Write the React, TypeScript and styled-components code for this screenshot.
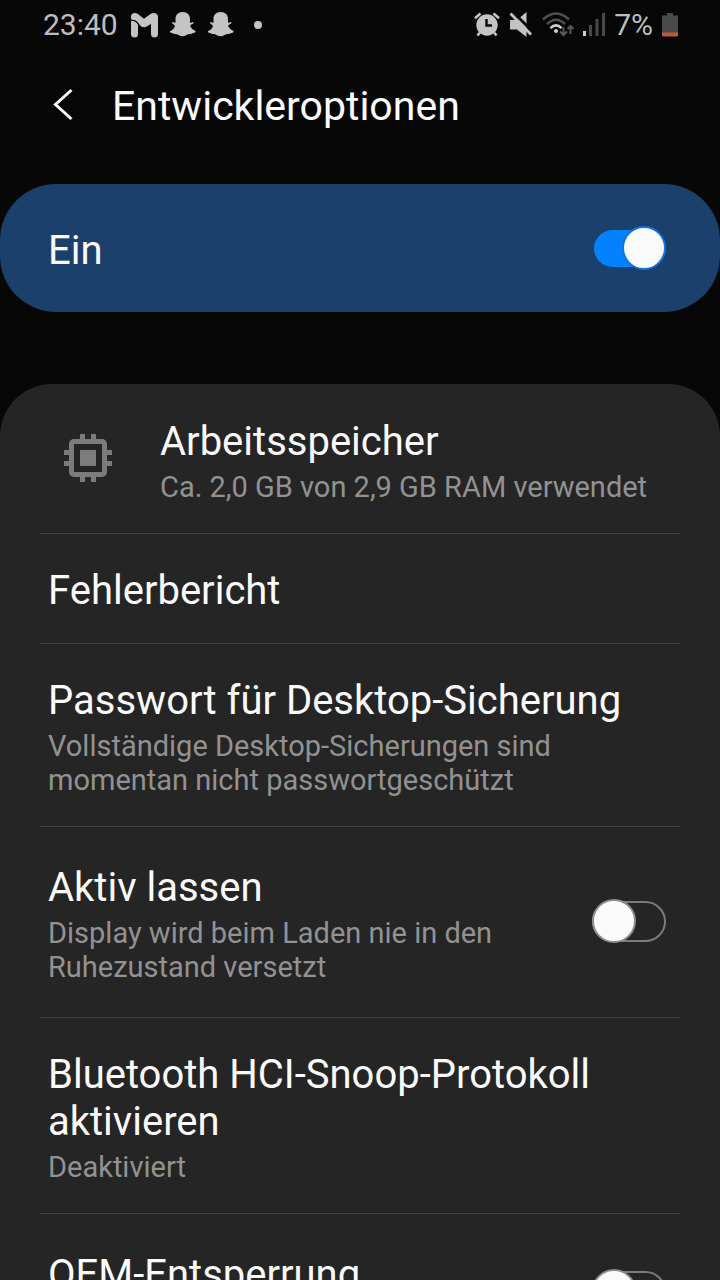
import React from "react";
import styled, { createGlobalStyle, css } from "styled-components";

const GlobalStyle = createGlobalStyle`
  *, *::before { box-sizing: border-box; }
  html, body { margin: 0; background: #070707; }
  body { font-family: Roboto, "Noto Sans", sans-serif; color: #fafafa; }
`;

const Screen = styled.div`
  height: 100vh;
  overflow: hidden;
  display: flex;
  flex-direction: column;
  background: #070707;
`;

const StatusBar = styled.div`
  flex: none;
  display: flex;
  align-items: center;
  justify-content: space-between;
  height: 48px;
  padding: 1px 42px 0 43px;
  font-size: 30px;
  line-height: 48px;
  color: #bebebe;
`;

const StatusGroup = styled.div<{ $gap: number }>`
  display: flex;
  align-items: center;
  gap: ${(p) => p.$gap}px;
  svg { display: block; flex: none; }
`;

const Dot = styled.span`
  width: 8px;
  height: 8px;
  margin-left: 8px;
  border-radius: 50%;
  background: #c4c4c4;
`;

const Header = styled.header`
  flex: none;
  display: flex;
  align-items: center;
  gap: 24px;
  height: 136px;
  padding: 0 40px 22px;
`;

const BackButton = styled.button`
  width: 48px;
  height: 48px;
  padding: 0;
  border: 0;
  background: none;
  color: #fafafa;
  svg { display: block; }
`;

const PageTitle = styled.h1`
  margin: 0;
  padding-top: 2px;
  font-size: 41px;
  line-height: 48px;
  font-weight: 400;
`;

const MasterCard = styled.label`
  flex: none;
  display: flex;
  align-items: center;
  justify-content: space-between;
  height: 128px;
  padding: 0 54px 0 48px;
  border-radius: 56px;
  background: #1b406b;
`;

const MasterLabel = styled.span`
  padding-top: 5px;
  font-size: 40px;
  line-height: 48px;
`;

const Switch = styled.input`
  appearance: none;
  flex: none;
  display: flex;
  align-items: center;
  width: 74px;
  height: 41px;
  margin: 0;
  border: 2px solid #7c7c7c;
  border-radius: 21px;
  &::before {
    content: "";
    flex: none;
    width: 44px;
    height: 44px;
    margin-left: -2px;
    border: 2px solid #8e8e8e;
    border-radius: 50%;
    background: #fafafa;
  }
  &:checked {
    justify-content: flex-end;
    width: 72px;
    height: 37px;
    border: 0;
    background: #0381fe;
  }
  &:checked::before {
    margin: 0;
    border-color: #1273dc;
  }
`;

const List = styled.ul`
  flex: none;
  margin: 72px 0 0;
  padding: 1px 40px 0;
  list-style: none;
  border-radius: 52px 52px 0 0;
  background: #252525;
`;

const Row = styled.li<{ $toggle?: boolean }>`
  display: flex;
  align-items: center;
  padding: 33px 8px 29px;
  & + & { border-top: 1px solid #424242; }
  ${(p) =>
    p.$toggle &&
    css`
      min-height: 157px;
      padding: 31px 14px 33px 8px;
    `}
`;

const RowIcon = styled.span`
  flex: none;
  width: 112px;
  padding: 0 0 7px 16px;
  svg { display: block; }
`;

const RowText = styled.label<{ $toggle?: boolean }>`
  flex: 1;
  min-width: 0;
  align-self: flex-start;
  display: flex;
  flex-direction: column;
  gap: 5px;
  padding-top: ${(p) => (p.$toggle ? 6 : 0)}px;
`;

const RowTitle = styled.span`
  font-size: 40px;
  line-height: 47px;
`;

const RowDetail = styled.span<{ $narrow?: boolean }>`
  max-width: ${(p) => (p.$narrow ? "480px" : "none")};
  font-size: 29px;
  line-height: 34px;
  color: #929292;
`;

const GmailIcon = () => (
  <svg width="28" height="26" viewBox="0 0 28 26" aria-hidden="true">
    <g fill="#c4c4c4">
      <path d="M1 8.500Q5.500 8.500 8 12.500V22a3.500 3.500 0 0 1-7 0Z" />
      <path d="M21 8 28 4V22a3.500 3.500 0 0 1-7 0Z" />
      <path d="M1 7.500V4.500C1 1 5 0 7.500 1.700L14 6.800 20.500 2C23.500-.3 28 1.200 28 5L20 12.500Q12 18.500 8.500 11.500Q6.500 8 1 7.500Z" />
    </g>
    <path d="M1 8Q6.500 8 8.500 12T14 16" fill="none" stroke="#070707" strokeWidth="1" />
  </svg>
);

const GhostIcon = () => (
  <svg width="26" height="26" viewBox="0 0 26 26" aria-hidden="true">
    <path
      d="M12.500 0C17.500 0 20 3 20 7V10.500Q21.500 11 22.500 10Q24 10.200 23.200 11.500Q20 13 20.200 14.200Q21.500 17.500 25.500 19Q26.200 20.200 24 21Q22 21 21.200 22Q18.500 21.500 16.500 23Q12.500 25.500 8.500 23Q6.500 21.500 4 22Q3 21 1.500 21Q-.7 20.200 0 19Q4 17.500 5 14.200Q5 13 2.300 11.500Q1.500 10.200 3 10Q4 11 5.500 10.500V7C5.500 3 8 0 12.500 0Z"
      fill="#c4c4c4"
    />
  </svg>
);

const AlarmIcon = () => (
  <svg width="26" height="26" viewBox="0 0 26 26" aria-hidden="true">
    <path d="M1 6.200 6.500 1.500M25 6.200 19.500 1.500M6 20.500 3.500 23.500M20 20.500 22.500 23.500" fill="none" stroke="#c4c4c4" strokeWidth="2.600" />
    <circle cx="13" cy="13" r="10.700" fill="#c4c4c4" />
    <path d="M12.500 7V13.500H18" fill="none" stroke="#070707" strokeWidth="2.400" />
  </svg>
);

const MuteIcon = () => (
  <svg width="24" height="26" viewBox="0 0 24 26" aria-hidden="true">
    <path d="M1 8H8L17.500 0V25L8 17.500H1Z" fill="#c4c4c4" />
    <path d="M4 0 24 20" stroke="#070707" strokeWidth="3" />
    <path d="M1.500 1.500 22 22.500" stroke="#c4c4c4" strokeWidth="2.800" />
  </svg>
);

const WifiIcon = () => (
  <svg width="32" height="26" viewBox="0 0 32 26" aria-hidden="true">
    <g fill="none" strokeWidth="2.600">
      <path d="M1 7.500Q14-4.500 27 7.500M5 12Q14 3.500 23 12" stroke="#505050" />
      <path d="M8.500 16.200Q14 10.500 19.500 16.200" stroke="#d0d0d0" />
    </g>
    <circle cx="14" cy="19" r="2" fill="#d0d0d0" />
    <g fill="none" stroke="#585858" strokeWidth="2">
      <path d="M21.500 15V23M18 19.500 21.500 23 25 19.500M28.500 22V14M25.500 17 28.500 14 31.500 17" />
    </g>
  </svg>
);

const SignalIcon = () => (
  <svg width="22" height="24" viewBox="0 0 22 24" aria-hidden="true">
    <path d="M0 18H3V23H0Z" fill="#d0d0d0" />
    <path d="M6 12H9V23H6ZM12.500 6H15.500V23H12.500ZM19 0H22V23H19Z" fill="#484848" />
  </svg>
);

const BatteryIcon = () => (
  <svg width="16" height="24" viewBox="0 0 16 24" aria-hidden="true">
    <path d="M5 0H11V2.500H16V20H0V2.500H5Z" fill="#4a4a4a" />
    <path d="M0 19.500H16V22.500Q16 23.500 15 23.500H1Q0 23.500 0 22.500Z" fill="#bd5a3e" />
  </svg>
);

const ChipIcon = () => (
  <svg width="48" height="48" viewBox="0 0 48 48" aria-hidden="true">
    <g fill="#7c7c7c">
      <path d="M16 0H21V6H16ZM27 0H32V6H27ZM16 42H21V48H16ZM27 42H32V48H27ZM0 16H6V21H0ZM0 27H6V32H0ZM42 16H48V21H42ZM42 27H48V32H42Z" />
      <path d="M16 16H32V32H16Z" />
    </g>
    <rect x="7.500" y="7.500" width="33" height="33" rx="2.500" fill="none" stroke="#7c7c7c" strokeWidth="5" />
  </svg>
);

type Item = {
  id: string;
  title: string;
  detail?: string;
  icon?: React.ReactNode;
  toggle?: boolean;
};

const items: Item[] = [
  { id: "memory", title: "Arbeitsspeicher", detail: "Ca. 2,0 GB von 2,9 GB RAM verwendet", icon: <ChipIcon /> },
  { id: "bugreport", title: "Fehlerbericht" },
  { id: "backup", title: "Passwort für Desktop-Sicherung", detail: "Vollständige Desktop-Sicherungen sind momentan nicht passwortgeschützt" },
  { id: "awake", title: "Aktiv lassen", detail: "Display wird beim Laden nie in den Ruhezustand versetzt", toggle: true },
  { id: "snoop", title: "Bluetooth HCI-Snoop-Protokoll aktivieren", detail: "Deaktiviert" },
  { id: "oem", title: "OEM-Entsperrung", toggle: true },
];

export default function App() {
  return (
    <Screen>
      <GlobalStyle />
      <StatusBar>
        <StatusGroup $gap={12}>
          <span>23:40</span>
          <GmailIcon />
          <GhostIcon />
          <GhostIcon />
          <Dot />
        </StatusGroup>
        <StatusGroup $gap={9}>
          <AlarmIcon />
          <MuteIcon />
          <WifiIcon />
          <SignalIcon />
          <span>7%</span>
          <BatteryIcon />
        </StatusGroup>
      </StatusBar>
      <Header>
        <BackButton aria-label="Zurück">
          <svg width="48" height="48" viewBox="0 0 48 48" aria-hidden="true">
            <path d="M31.500 9 15.500 23.500 31.500 38" fill="none" stroke="currentColor" strokeWidth="3" />
          </svg>
        </BackButton>
        <PageTitle>Entwickleroptionen</PageTitle>
      </Header>
      <MasterCard>
        <MasterLabel>Ein</MasterLabel>
        <Switch type="checkbox" role="switch" defaultChecked />
      </MasterCard>
      <List>
        {items.map((item) => (
          <Row key={item.id} $toggle={item.toggle}>
            {item.icon && <RowIcon>{item.icon}</RowIcon>}
            <RowText
              as={item.toggle ? "label" : "div"}
              htmlFor={item.toggle ? item.id : undefined}
              $toggle={item.toggle}
            >
              <RowTitle>{item.title}</RowTitle>
              {item.detail && <RowDetail $narrow={item.toggle}>{item.detail}</RowDetail>}
            </RowText>
            {item.toggle && <Switch type="checkbox" role="switch" id={item.id} />}
          </Row>
        ))}
      </List>
    </Screen>
  );
}
